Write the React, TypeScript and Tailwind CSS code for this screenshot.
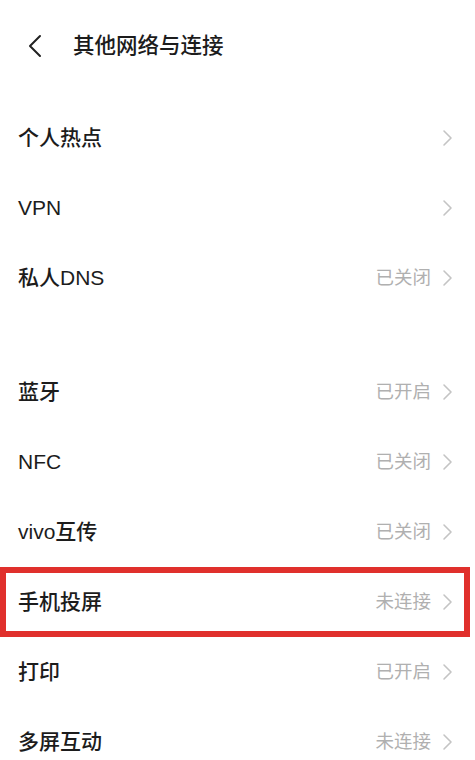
import React from "react";

type Item = { label: string; value?: string; highlight?: boolean };

const groupA: Item[] = [
  { label: "个人热点" },
  { label: "VPN" },
  { label: "私人DNS", value: "已关闭" },
];

const groupB: Item[] = [
  { label: "蓝牙", value: "已开启" },
  { label: "NFC", value: "已关闭" },
  { label: "vivo互传", value: "已关闭" },
  { label: "手机投屏", value: "未连接", highlight: true },
  { label: "打印", value: "已开启" },
  { label: "多屏互动", value: "未连接" },
];

function Chevron() {
  return (
    <svg width="11" height="18" viewBox="0 0 11 18" fill="none">
      <path d="M2 2l7 7-7 7" stroke="#c4c4c4" strokeWidth="1.6" strokeLinecap="round" strokeLinejoin="round" />
    </svg>
  );
}

function Row({ item }: { item: Item }) {
  return (
    <div className="relative flex h-[70px] items-center justify-between pl-[18px] pr-[22px]">
      <span className="text-[21px] font-medium text-[#1c1c1c]">{item.label}</span>
      <div className="flex items-center gap-[11px]">
        {item.value && <span className="text-[18.5px] text-[#b0b0b0]">{item.value}</span>}
        <Chevron />
      </div>
      {item.highlight && (
        <span className="pointer-events-none absolute inset-y-0 left-0 right-[5px] border-[6px] border-[#e0302c]" />
      )}
    </div>
  );
}

export default function App() {
  return (
    <div
      className="h-[760px] w-[475px] overflow-hidden bg-white"
      style={{ fontFamily: '"Liberation Sans", "Noto Sans CJK SC", sans-serif' }}
    >
      <div className="flex h-[92px] items-center gap-[30px] pl-[27px]">
        <svg width="16" height="24" viewBox="0 0 16 24" fill="none">
          <path d="M13 2L3 12l10 10" stroke="#222" strokeWidth="2" strokeLinecap="round" strokeLinejoin="round" />
        </svg>
        <span className="text-[21.5px] font-medium text-[#1c1c1c]">其他网络与连接</span>
      </div>
      <div className="pt-[11px]">
        {groupA.map((it) => (
          <Row key={it.label} item={it} />
        ))}
      </div>
      <div className="pt-[44px]">
        {groupB.map((it) => (
          <Row key={it.label} item={it} />
        ))}
      </div>
    </div>
  );
}
